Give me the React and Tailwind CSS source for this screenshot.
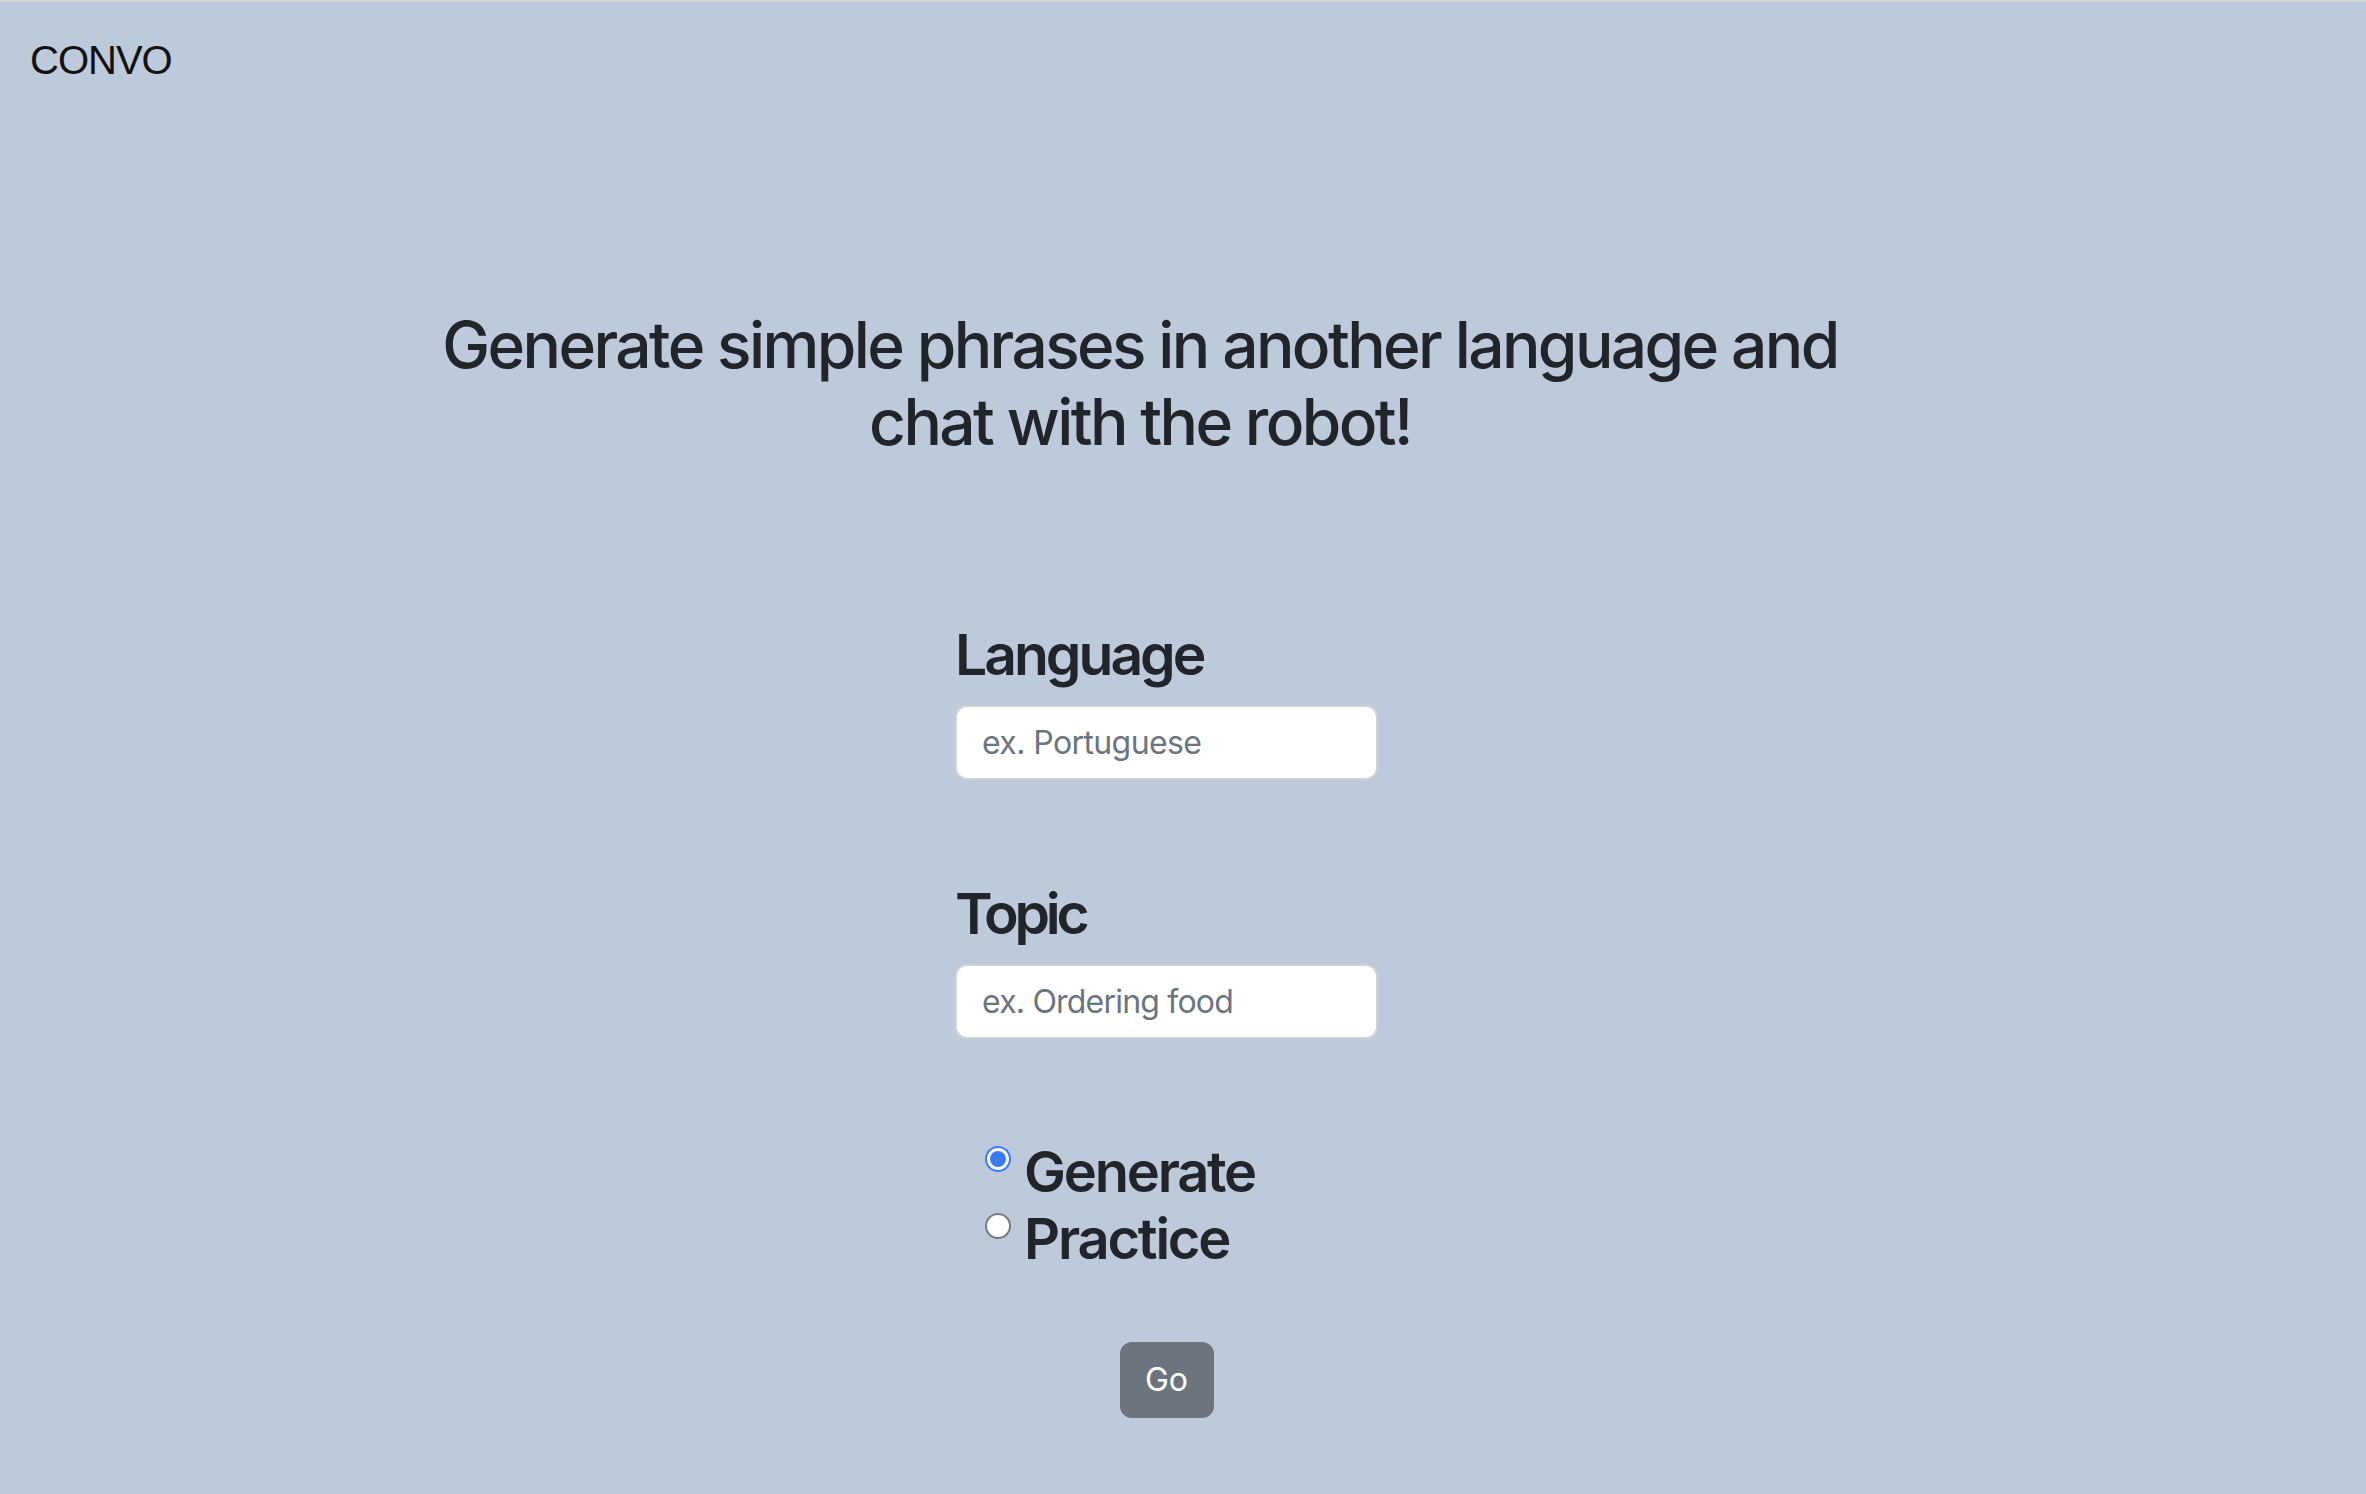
import React from "react";

export default function App() {
  return (
    <div
      className="min-h-[1494px] w-full bg-[#bccadb] border-t-2 border-[#d6d6d2] text-[#212529]"
      style={{ fontFamily: "Inter, 'Noto Sans', sans-serif" }}
    >
      <header className="pt-[38px] pl-[30px]">
        <div
          className="text-[40px] leading-none text-[#111] tracking-[-1px]"
          style={{ fontFamily: "'Liberation Sans', Arial, sans-serif" }}
        >
          CONVO
        </div>
      </header>

      <div className="mt-[227px] flex justify-center pr-[86px]">
        <h1 className="text-center text-[64px] leading-[1.2] font-[550] tracking-[-2.6px]">
          Generate simple phrases in another language and
          <br />
          chat with the robot!
        </h1>
      </div>

      <div className="mt-[158px] flex flex-col pl-[955px]">
        <div className="flex w-[423px] flex-col">
          <label className="text-[57px] leading-[72px] font-[560] tracking-[-3px]">Language</label>
          <input
            type="text"
            placeholder="ex. Portuguese"
            className="mt-[14px] h-[75px] w-full rounded-[12px] border-2 border-[#ced4da] bg-white px-[25px] text-[32px] tracking-[-0.6px] text-[#212529] outline-none placeholder:text-[#6c757d]"
          />

          <label className="mt-[98px] text-[57px] leading-[72px] font-[560] tracking-[-4.2px]">Topic</label>
          <input
            type="text"
            placeholder="ex. Ordering food"
            className="mt-[14px] h-[75px] w-full rounded-[12px] border-2 border-[#ced4da] bg-white px-[25px] text-[32px] tracking-[-0.8px] text-[#212529] outline-none placeholder:text-[#6c757d]"
          />

          <div className="mt-[100px] flex flex-col pl-[30px]">
            <div className="flex items-start gap-[13px]">
              <div className="mt-[7px] flex h-[26px] w-[26px] items-center justify-center rounded-full border-2 border-[#3b7cf5] bg-white">
                <div className="h-[16px] w-[16px] rounded-full bg-[#3b7cf5]" />
              </div>
              <span className="text-[56px] leading-[1.2] font-[560] tracking-[-2.2px]">Generate</span>
            </div>
            <div className="flex items-start gap-[13px]">
              <div className="mt-[7px] h-[26px] w-[26px] rounded-full border-2 border-[#7a7a7a] bg-white" />
              <span className="text-[56px] leading-[1.2] font-[560] tracking-[-2.2px]">Practice</span>
            </div>
          </div>

          <div className="mt-[69px] flex justify-center">
            <button className="h-[76px] w-[94px] rounded-[12px] bg-[#6c757d] text-[32px] text-white">
              Go
            </button>
          </div>
        </div>
      </div>
    </div>
  );
}
